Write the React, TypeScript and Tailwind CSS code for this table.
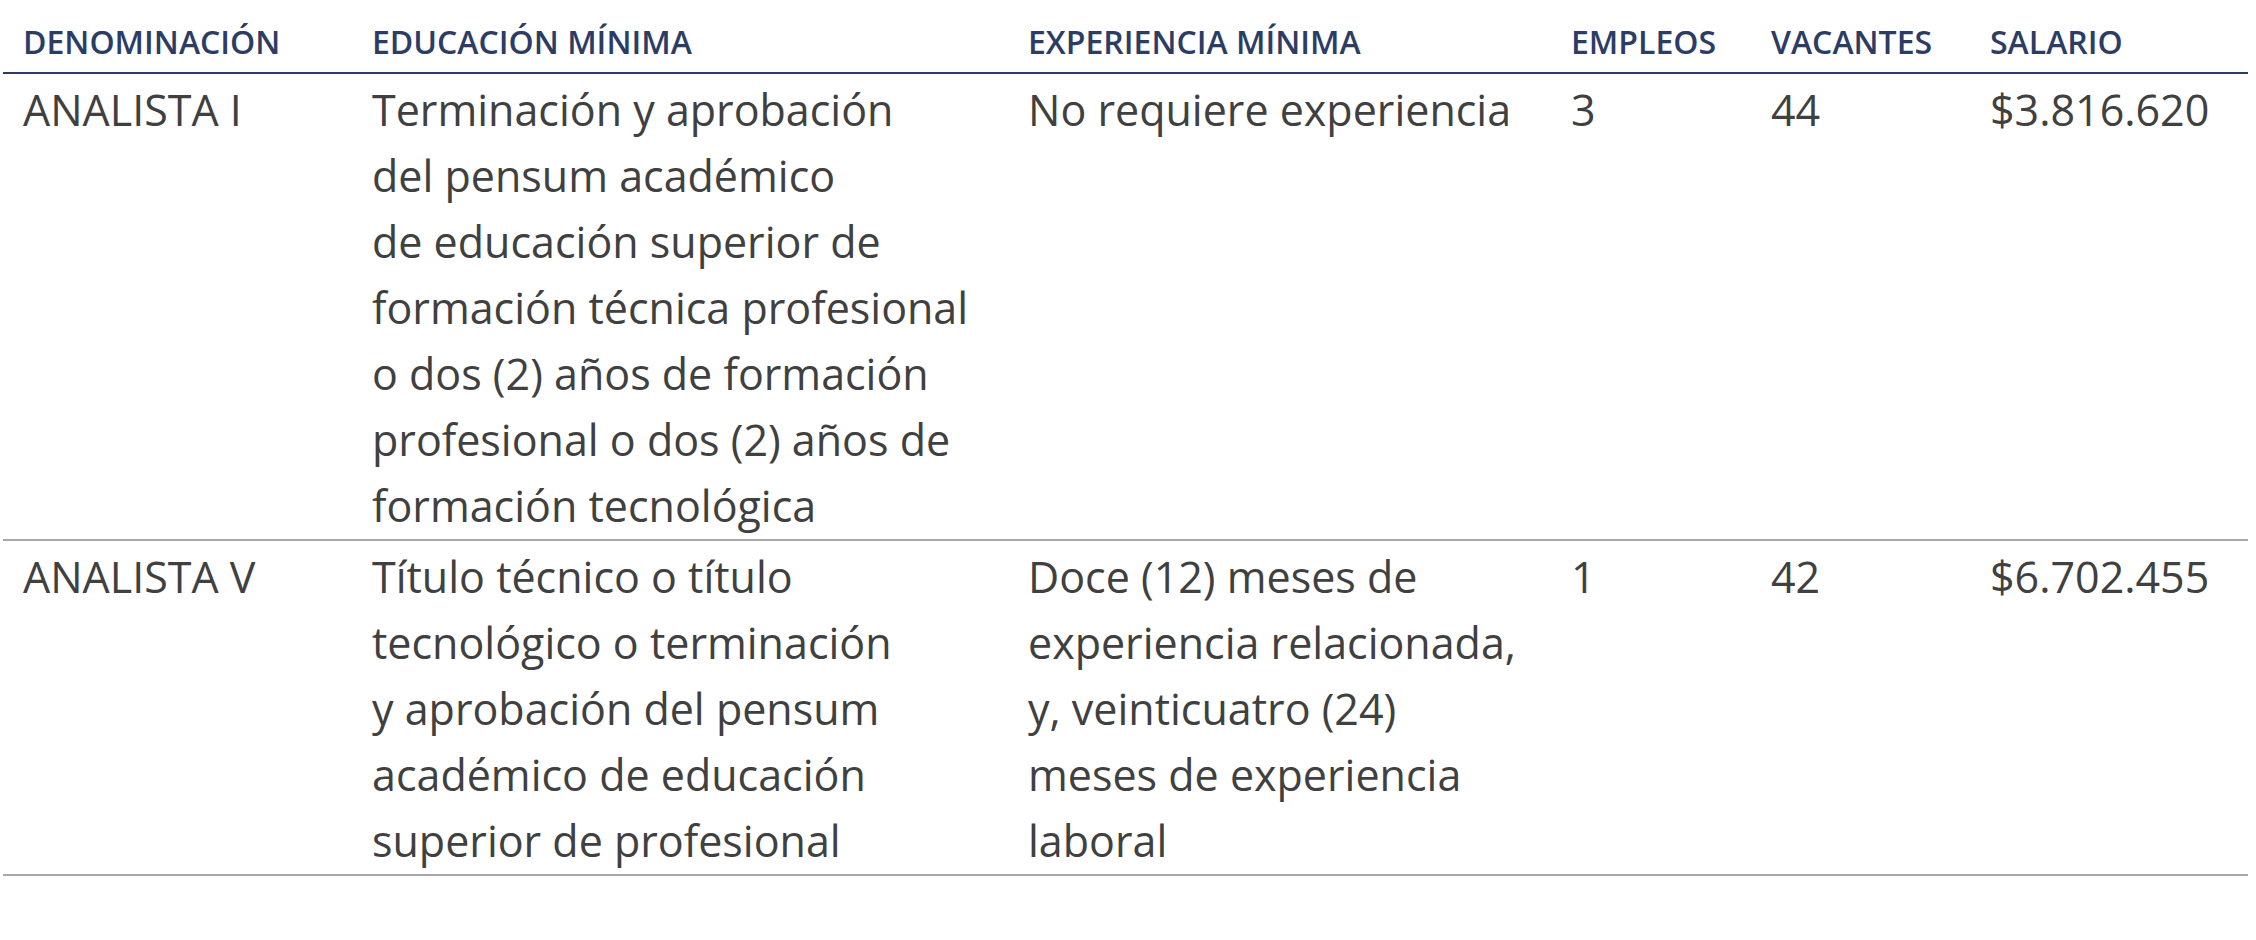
const HEADERS = [
  "DENOMINACIÓN",
  "EDUCACIÓN MÍNIMA",
  "EXPERIENCIA MÍNIMA",
  "EMPLEOS",
  "VACANTES",
  "SALARIO",
];

const COL_WIDTHS = ["w-[349px]", "w-[656px]", "w-[543px]", "w-[200px]", "w-[219px]", "w-[278px]"];

const ROWS = [
  {
    name: "ANALISTA I",
    education: [
      "Terminación y aprobación",
      "del pensum académico",
      "de educación superior de",
      "formación técnica profesional",
      "o dos (2) años de formación",
      "profesional o dos (2) años de",
      "formación tecnológica",
    ],
    experience: ["No requiere experiencia"],
    jobs: "3",
    vacancies: "44",
    salary: "$3.816.620",
  },
  {
    name: "ANALISTA V",
    education: [
      "Título técnico o título",
      "tecnológico o terminación",
      "y aprobación del pensum",
      "académico de educación",
      "superior de profesional",
    ],
    experience: [
      "Doce (12) meses de",
      "experiencia relacionada,",
      "y, veinticuatro (24)",
      "meses de experiencia",
      "laboral",
    ],
    jobs: "1",
    vacancies: "42",
    salary: "$6.702.455",
  },
];

function Lines({ lines }: { lines: string[] }) {
  return (
    <>
      {lines.map((line) => (
        <span key={line} className="block whitespace-nowrap">
          {line}
        </span>
      ))}
    </>
  );
}

export default function App() {
  const cell = "align-top pl-5 pr-2 pt-[3px] pb-0 text-left";

  return (
    <div
      className="min-h-screen bg-white pl-[3px] pr-2"
      style={{ fontFamily: '"Open Sans", "Noto Sans", sans-serif' }}
    >
      <table className="w-[2245px] table-fixed border-collapse">
        <colgroup>
          {COL_WIDTHS.map((w, i) => (
            <col key={i} className={w} />
          ))}
        </colgroup>
        <thead>
          <tr className="border-b-2 border-[#2c3d65]">
            {HEADERS.map((h) => (
              <th
                key={h}
                className="pl-5 pr-2 pt-5 pb-2 text-left text-[32px] leading-[44px] font-semibold text-[#2c3d65] whitespace-nowrap"
              >
                {h}
              </th>
            ))}
          </tr>
        </thead>
        <tbody className="text-[43px] leading-[66px] text-[#404040]">
          {ROWS.map((row) => (
            <tr key={row.name} className="border-b-2 border-[#a8a8a8]">
              <td className={cell + " whitespace-nowrap"}>{row.name}</td>
              <td className={cell}>
                <Lines lines={row.education} />
              </td>
              <td className={cell}>
                <Lines lines={row.experience} />
              </td>
              <td className={cell}>{row.jobs}</td>
              <td className={cell}>{row.vacancies}</td>
              <td className={cell + " whitespace-nowrap"}>{row.salary}</td>
            </tr>
          ))}
        </tbody>
      </table>
    </div>
  );
}
